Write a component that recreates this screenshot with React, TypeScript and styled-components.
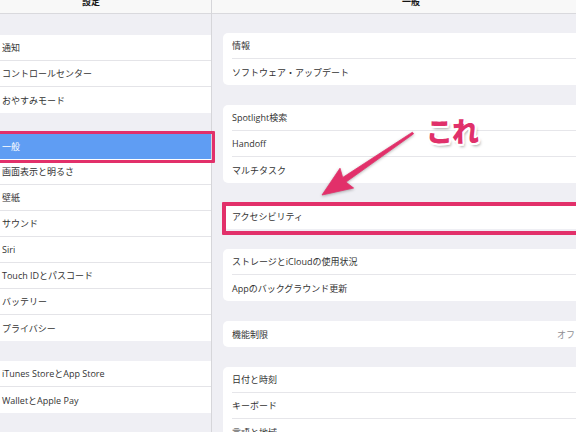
import React from "react";
import styled, { createGlobalStyle } from "styled-components";

const GlobalStyle = createGlobalStyle`
  html, body { margin: 0; padding: 0; }
  body {
    width: 576px;
    height: 432px;
    overflow: hidden;
    background: #efeff4;
    font-family: "Open Sans", "Noto Sans CJK JP", sans-serif;
    -webkit-font-smoothing: antialiased;
  }
  #root { width: 576px; height: 432px; }
`;

const Screen = styled.div`
  position: relative;
  display: flex;
  width: 576px;
  height: 432px;
  overflow: hidden;
  background: #efeff4;
`;

const Sidebar = styled.div`
  flex: none;
  width: 211px;
  border-right: 1px solid #d6d6da;
  background: #efeff4;
  display: flex;
  flex-direction: column;
  overflow: hidden;
`;

const Detail = styled.div`
  flex: 1;
  min-width: 0;
  background: #efeff4;
  display: flex;
  flex-direction: column;
  overflow: hidden;
`;

const NavBar = styled.div`
  flex: none;
  height: 13px;
  background: #f8f8f8;
  border-bottom: 1px solid #d9d9dd;
  overflow: hidden;
`;

const NavTitle = styled.div<{ $offset: number }>`
  margin-top: -3px;
  padding-left: ${(p) => p.$offset}px;
  font-size: 9px;
  line-height: 9px;
  font-weight: 700;
  color: #141414;
`;

const SideGroup = styled.div<{ $gap: number }>`
  flex: none;
  margin-top: ${(p) => p.$gap}px;
  background: #fff;
`;

const SideRow = styled.div<{ $last?: boolean; $selected?: boolean }>`
  box-sizing: border-box;
  height: 26px;
  display: flex;
  align-items: center;
  padding-left: 2px;
  font-size: 9px;
  color: ${(p) => (p.$selected ? "#ffffff" : "#333333")};
  background: ${(p) => (p.$selected ? "#5f9df3" : "#ffffff")};
  border-bottom: ${(p) =>
    p.$last || p.$selected ? "none" : "1px solid #e4e4e8"};
  white-space: nowrap;
`;

const Card = styled.div<{ $gap: number }>`
  flex: none;
  margin: ${(p) => p.$gap}px -30px 0 11px;
  background: #fff;
  border-radius: 5px;
  overflow: hidden;
`;

const CardRow = styled.div`
  padding-left: 9px;
`;

const RowBody = styled.div<{ $last?: boolean }>`
  box-sizing: border-box;
  height: 26px;
  display: flex;
  align-items: center;
  justify-content: space-between;
  padding-right: 31px;
  font-size: 9px;
  color: #333333;
  border-bottom: ${(p) => (p.$last ? "none" : "1px solid #e6e6ea")};
  white-space: nowrap;
`;

const Value = styled.span`
  color: #8e8e93;
`;

const HighlightBox = styled.div<{
  $left: number;
  $top: number;
  $w: number;
  $h: number;
  $b: number;
}>`
  position: absolute;
  left: ${(p) => p.$left}px;
  top: ${(p) => p.$top}px;
  width: ${(p) => p.$w}px;
  height: ${(p) => p.$h}px;
  box-sizing: border-box;
  border: ${(p) => p.$b}px solid #e2306a;
  border-radius: 1px;
  pointer-events: none;
`;

const Callout = styled.div`
  position: absolute;
  left: 426px;
  top: 117px;
  font-family: "Noto Sans CJK JP", sans-serif;
  font-size: 27px;
  line-height: 27px;
  font-weight: 900;
  color: #e0306a;
  letter-spacing: -1px;
  text-shadow: 2px 0 0 #fff, -2px 0 0 #fff, 0 2px 0 #fff, 0 -2px 0 #fff,
    1.5px 1.5px 0 #fff, -1.5px 1.5px 0 #fff, 1.5px -1.5px 0 #fff,
    -1.5px -1.5px 0 #fff, 2px 3px 3px rgba(0, 0, 0, 0.35);
  pointer-events: none;
`;

const ArrowLayer = styled.svg`
  position: absolute;
  left: 0;
  top: 0;
  width: 576px;
  height: 432px;
  pointer-events: none;
  filter: drop-shadow(0 1px 1.5px rgba(0, 0, 0, 0.3));
`;

type Item = { label: string; value?: string; selected?: boolean };

const sideGroups: Item[][] = [
  [{ label: "通知" }, { label: "コントロールセンター" }, { label: "おやすみモード" }],
  [
    { label: "一般", selected: true },
    { label: "画面表示と明るさ" },
    { label: "壁紙" },
    { label: "サウンド" },
    { label: "Siri" },
    { label: "Touch IDとパスコード" },
    { label: "バッテリー" },
    { label: "プライバシー" },
  ],
  [{ label: "iTunes StoreとApp Store" }, { label: "WalletとApple Pay" }],
];

const detailGroups: Item[][] = [
  [{ label: "情報" }, { label: "ソフトウェア・アップデート" }],
  [{ label: "Spotlight検索" }, { label: "Handoff" }, { label: "マルチタスク" }],
  [{ label: "アクセシビリティ" }],
  [{ label: "ストレージとiCloudの使用状況" }, { label: "Appのバックグラウンド更新" }],
  [{ label: "機能制限", value: "オフ" }],
  [{ label: "日付と時刻" }, { label: "キーボード" }, { label: "言語と地域" }],
];

export default function App() {
  return (
    <>
      <GlobalStyle />
      <Screen>
        <Sidebar>
          <NavBar>
            <NavTitle $offset={82}>設定</NavTitle>
          </NavBar>
          {sideGroups.map((g, gi) => (
            <SideGroup key={gi} $gap={gi === 0 ? 21 : 20}>
              {g.map((it, i) => (
                <SideRow
                  key={it.label}
                  $last={i === g.length - 1}
                  $selected={it.selected}
                >
                  {it.label}
                </SideRow>
              ))}
            </SideGroup>
          ))}
        </Sidebar>
        <Detail>
          <NavBar>
            <NavTitle $offset={190}>一般</NavTitle>
          </NavBar>
          {detailGroups.map((g, gi) => (
            <Card key={gi} $gap={gi === 0 ? 19 : 20}>
              {g.map((it, i) => (
                <CardRow key={it.label}>
                  <RowBody $last={i === g.length - 1}>
                    <span>{it.label}</span>
                    {it.value && <Value>{it.value}</Value>}
                  </RowBody>
                </CardRow>
              ))}
            </Card>
          ))}
        </Detail>

        <HighlightBox $left={-5} $top={131} $w={220} $h={32} $b={3} />
        <HighlightBox $left={222} $top={202} $w={370} $h={33} $b={4} />

        <ArrowLayer viewBox="0 0 576 432">
          <polygon
            points="412.4,132.2 342.7,177.5 340,168.2 322,195 353.6,188 345.9,182.1 413.6,133.8"
            fill="#e2306a"
            stroke="#e2306a"
            strokeWidth="0.8"
            strokeLinejoin="round"
          />
        </ArrowLayer>
        <Callout>これ</Callout>
      </Screen>
    </>
  );
}
